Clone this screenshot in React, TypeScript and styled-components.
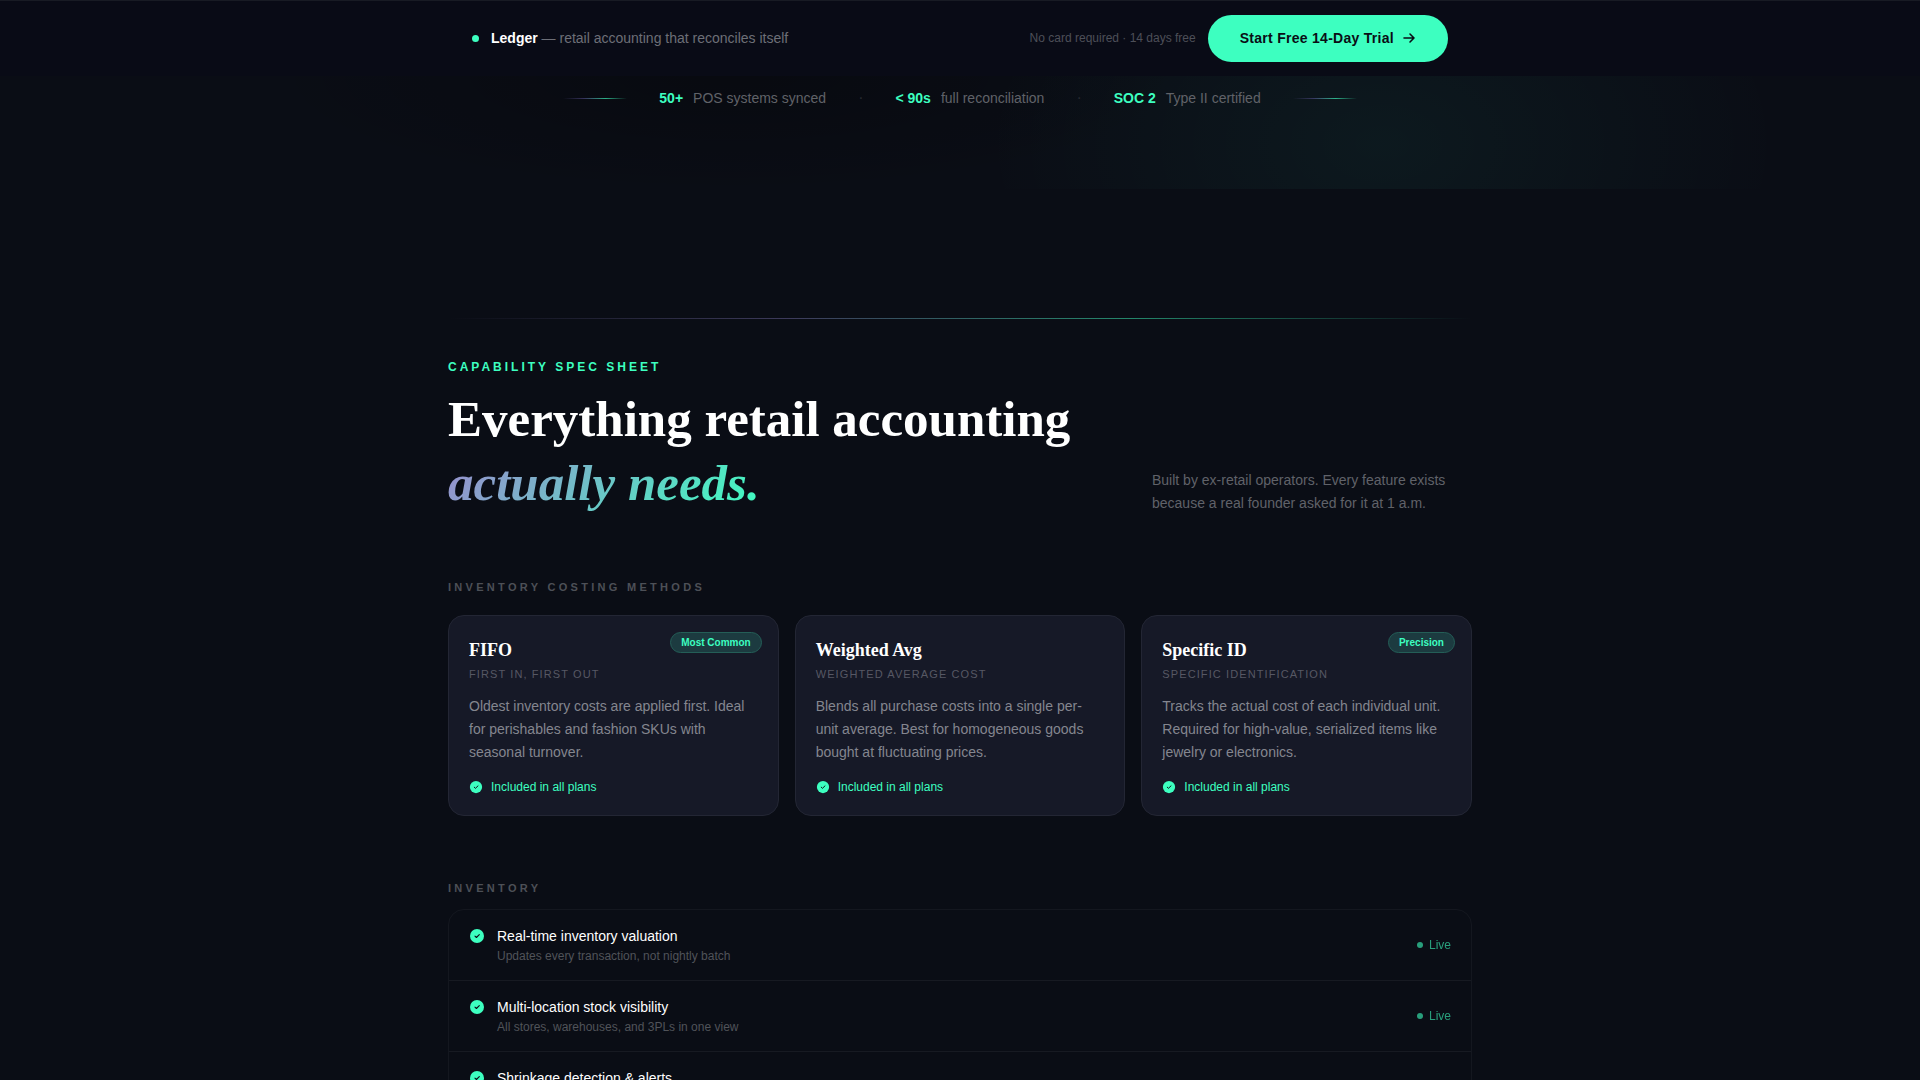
import React from "react";
import styled, { createGlobalStyle } from "styled-components";

const sans = `"Liberation Sans", Arial, sans-serif`;
const serif = `"Liberation Serif", "Times New Roman", serif`;
const mint = "#3dffc0";
const ink = "#0a0d15";

const GlobalStyle = createGlobalStyle`
  *, *::before, *::after { box-sizing: border-box; }
  html { background: ${ink}; }
  body { margin: 0; font-family: ${sans}; font-size: 14px; color: #fff; }
  h1, h2, h3, p, ul { margin: 0; padding: 0; }
  ul { list-style: none; }
`;

const Page = styled.div`
  height: 100vh;
  overflow: hidden;
  background: ${ink};
`;

const Container = styled.div`
  max-width: 1024px;
  margin: 0 auto;
`;

const Header = styled.header`
  background: #090b16;
  border-top: 1px solid #181b24;
`;

const HeaderInner = styled(Container)`
  display: flex;
  align-items: center;
  justify-content: space-between;
  padding: 14px 24px;
`;

const Brand = styled.div`
  display: flex;
  align-items: center;
  gap: 12px;
  padding-bottom: 1px;
  color: #6d6f77;
`;

const Dot = styled.span<{ $size: number }>`
  flex: none;
  width: ${(p) => p.$size}px;
  height: ${(p) => p.$size}px;
  border-radius: 50%;
  background: ${mint};
`;

const BrandName = styled.strong`
  color: #fff;
`;

const HeaderActions = styled.div`
  display: flex;
  align-items: center;
  gap: 12px;
`;

const Note = styled.span`
  padding-bottom: 1px;
  font-size: 12px;
  color: #4d4f58;
`;

const TrialButton = styled.button`
  display: flex;
  align-items: center;
  gap: 8px;
  padding: 15px 32px 16px;
  border: 0;
  border-radius: 24px;
  background: ${mint};
  color: ${ink};
  font: bold 14px/16px ${sans};
  letter-spacing: 0.02em;
  cursor: pointer;
`;

const Hero = styled.section`
  height: 113px;
  overflow: hidden;
  background:
    radial-gradient(ellipse 400px 260px at 72% 60%, rgba(61, 255, 210, 0.05), transparent),
    radial-gradient(ellipse 480px 120px at 38% 0, rgba(0, 0, 0, 0.25), transparent);
`;

const Stats = styled.ul`
  display: flex;
  align-items: center;
  justify-content: center;
  gap: 32px;
  padding-top: 14px;
  line-height: 16px;
`;

const Stat = styled.li`
  display: flex;
  gap: 10px;
  color: #606268;
`;

const StatValue = styled.strong`
  color: ${mint};
`;

const StatRule = styled.li`
  width: 64px;
  height: 1px;
  background: linear-gradient(90deg, transparent, #7c6fcd66, #3dffc0aa, transparent);
`;

const StatSeparator = styled.li`
  font-size: 16px;
  color: #262930;
`;

const Divider = styled.hr`
  height: 1px;
  margin: 0;
  border: 0;
  background: linear-gradient(90deg, transparent, rgba(155, 142, 220, 0.7), ${mint}, transparent);
  opacity: 0.5;
`;

const Main = styled.main`
  padding-top: 129px;
`;

const Intro = styled.div`
  display: flex;
  align-items: flex-end;
  justify-content: space-between;
  padding-top: 41px;
`;

const Eyebrow = styled.p`
  margin-bottom: 13px;
  font-size: 12px;
  font-weight: bold;
  line-height: 14px;
  letter-spacing: 0.25em;
  text-transform: uppercase;
  color: ${mint};
`;

const Title = styled.h1`
  font: bold 51px/64px ${serif};
`;

const TitleAccent = styled.em`
  display: inline-block;
  background: linear-gradient(135deg, #9b8ace, ${mint});
  background-clip: text;
  -webkit-background-clip: text;
  color: transparent;
`;

const Aside = styled.p`
  width: 320px;
  padding-right: 24px;
  line-height: 23px;
  color: #606269;
`;

const GroupTitle = styled.h2`
  font-size: 11px;
  line-height: 14px;
  letter-spacing: 0.3em;
  text-transform: uppercase;
  color: #4d5057;
`;

const Group = styled.section<{ $gap: number }>`
  display: grid;
  gap: ${(p) => p.$gap}px;
  padding-top: 65px;
`;

const Cards = styled.div`
  display: grid;
  grid-template-columns: repeat(3, 1fr);
  gap: 16px;
`;

const Card = styled.article`
  position: relative;
  padding: 24px 20px 20px;
  border: 1px solid #232634;
  border-radius: 16px;
  background: #161927;
`;

const CardTitle = styled.h3`
  font: bold 18px/20px ${serif};
`;

const CardSubtitle = styled.p`
  margin-top: 6px;
  font-size: 11px;
  line-height: 16px;
  letter-spacing: 0.1em;
  text-transform: uppercase;
  color: #565864;
`;

const CardText = styled.p`
  margin-top: 13px;
  line-height: 23px;
  color: #84868f;
`;

const Included = styled.p`
  display: flex;
  align-items: center;
  gap: 8px;
  margin-top: 15px;
  font-size: 12px;
  line-height: 16px;
  color: ${mint};
`;

const Badge = styled.span`
  position: absolute;
  top: 16px;
  right: 16px;
  padding: 0 10px;
  border: 1px solid #245e57;
  border-radius: 11px;
  background: #1c3b40;
  font-size: 10px;
  font-weight: bold;
  line-height: 19px;
  color: ${mint};
`;

const FeatureList = styled.ul`
  border: 1px solid #14171f;
  border-radius: 16px;
  overflow: hidden;
`;

const Feature = styled.li`
  display: flex;
  align-items: center;
  justify-content: space-between;
  padding: 18px 20px 16px;
  border-bottom: 1px solid #171a22;
`;

const FeatureBody = styled.div`
  display: flex;
  gap: 12px;
`;

const FeatureName = styled.p`
  line-height: 16px;
`;

const FeatureNote = styled.p`
  min-height: 16px;
  margin-top: 4px;
  font-size: 12px;
  line-height: 16px;
  color: #505359;
`;

const Live = styled.span`
  display: flex;
  align-items: center;
  gap: 6px;
  padding-bottom: 2px;
  font-size: 12px;
  color: ${mint};
  opacity: 0.6;
`;

const CheckIcon = ({ size }: { size: number }) => (
  <svg width={size} height={size} viewBox="0 0 16 16" fill="none" aria-hidden="true">
    <circle cx="8" cy="8" r="7" fill={mint} />
    <path d="M6 8.2l1.4 1.3L10.3 6.7" stroke={ink} strokeWidth="1.1" strokeLinecap="round" strokeLinejoin="round" />
  </svg>
);

const ArrowIcon = () => (
  <svg width="14" height="14" viewBox="0 0 14 14" fill="none" aria-hidden="true">
    <path d="M2 7h10M8 3l4 4-4 4" stroke="currentColor" strokeWidth="1.6" strokeLinecap="round" strokeLinejoin="round" />
  </svg>
);

const stats = [
  { value: "50+", label: "POS systems synced" },
  { value: "< 90s", label: "full reconciliation" },
  { value: "SOC 2", label: "Type II certified" },
];

const methods = [
  {
    name: "FIFO",
    full: "First In, First Out",
    badge: "Most Common",
    text: "Oldest inventory costs are applied first. Ideal for perishables and fashion SKUs with seasonal turnover.",
  },
  {
    name: "Weighted Avg",
    full: "Weighted Average Cost",
    text: "Blends all purchase costs into a single per-unit average. Best for homogeneous goods bought at fluctuating prices.",
  },
  {
    name: "Specific ID",
    full: "Specific Identification",
    badge: "Precision",
    text: "Tracks the actual cost of each individual unit. Required for high-value, serialized items like jewelry or electronics.",
  },
];

const features = [
  { name: "Real-time inventory valuation", note: "Updates every transaction, not nightly batch" },
  { name: "Multi-location stock visibility", note: "All stores, warehouses, and 3PLs in one view" },
  { name: "Shrinkage detection & alerts", note: "" },
];

export default function App() {
  return (
    <Page>
      <GlobalStyle />
      <Header>
        <HeaderInner>
          <Brand>
            <Dot $size={7} />
            <span>
              <BrandName>Ledger</BrandName> — retail accounting that reconciles itself
            </span>
          </Brand>
          <HeaderActions>
            <Note>No card required · 14 days free</Note>
            <TrialButton type="button">
              Start Free 14-Day Trial
              <ArrowIcon />
            </TrialButton>
          </HeaderActions>
        </HeaderInner>
      </Header>
      <Hero>
        <Stats>
          <StatRule aria-hidden="true" />
          {stats.map((s, i) => (
            <React.Fragment key={s.value}>
              {i > 0 && <StatSeparator aria-hidden="true">·</StatSeparator>}
              <Stat>
                <StatValue>{s.value}</StatValue>
                <span>{s.label}</span>
              </Stat>
            </React.Fragment>
          ))}
          <StatRule aria-hidden="true" />
        </Stats>
      </Hero>
      <Main>
        <Container>
          <Divider />
          <Intro>
            <div>
              <Eyebrow>Capability Spec Sheet</Eyebrow>
              <Title>
                Everything retail accounting
                <br />
                <TitleAccent>actually needs.</TitleAccent>
              </Title>
            </div>
            <Aside>Built by ex-retail operators. Every feature exists because a real founder asked for it at 1 a.m.</Aside>
          </Intro>
          <Group $gap={21}>
            <GroupTitle>Inventory Costing Methods</GroupTitle>
            <Cards>
              {methods.map((m) => (
                <Card key={m.name}>
                  {m.badge && <Badge>{m.badge}</Badge>}
                  <CardTitle>{m.name}</CardTitle>
                  <CardSubtitle>{m.full}</CardSubtitle>
                  <CardText>{m.text}</CardText>
                  <Included>
                    <CheckIcon size={14} />
                    Included in all plans
                  </Included>
                </Card>
              ))}
            </Cards>
          </Group>
          <Group $gap={14}>
            <GroupTitle>Inventory</GroupTitle>
            <FeatureList>
              {features.map((f) => (
                <Feature key={f.name}>
                  <FeatureBody>
                    <CheckIcon size={16} />
                    <div>
                      <FeatureName>{f.name}</FeatureName>
                      <FeatureNote>{f.note}</FeatureNote>
                    </div>
                  </FeatureBody>
                  <Live>
                    <Dot $size={6} />
                    Live
                  </Live>
                </Feature>
              ))}
            </FeatureList>
          </Group>
        </Container>
      </Main>
    </Page>
  );
}
